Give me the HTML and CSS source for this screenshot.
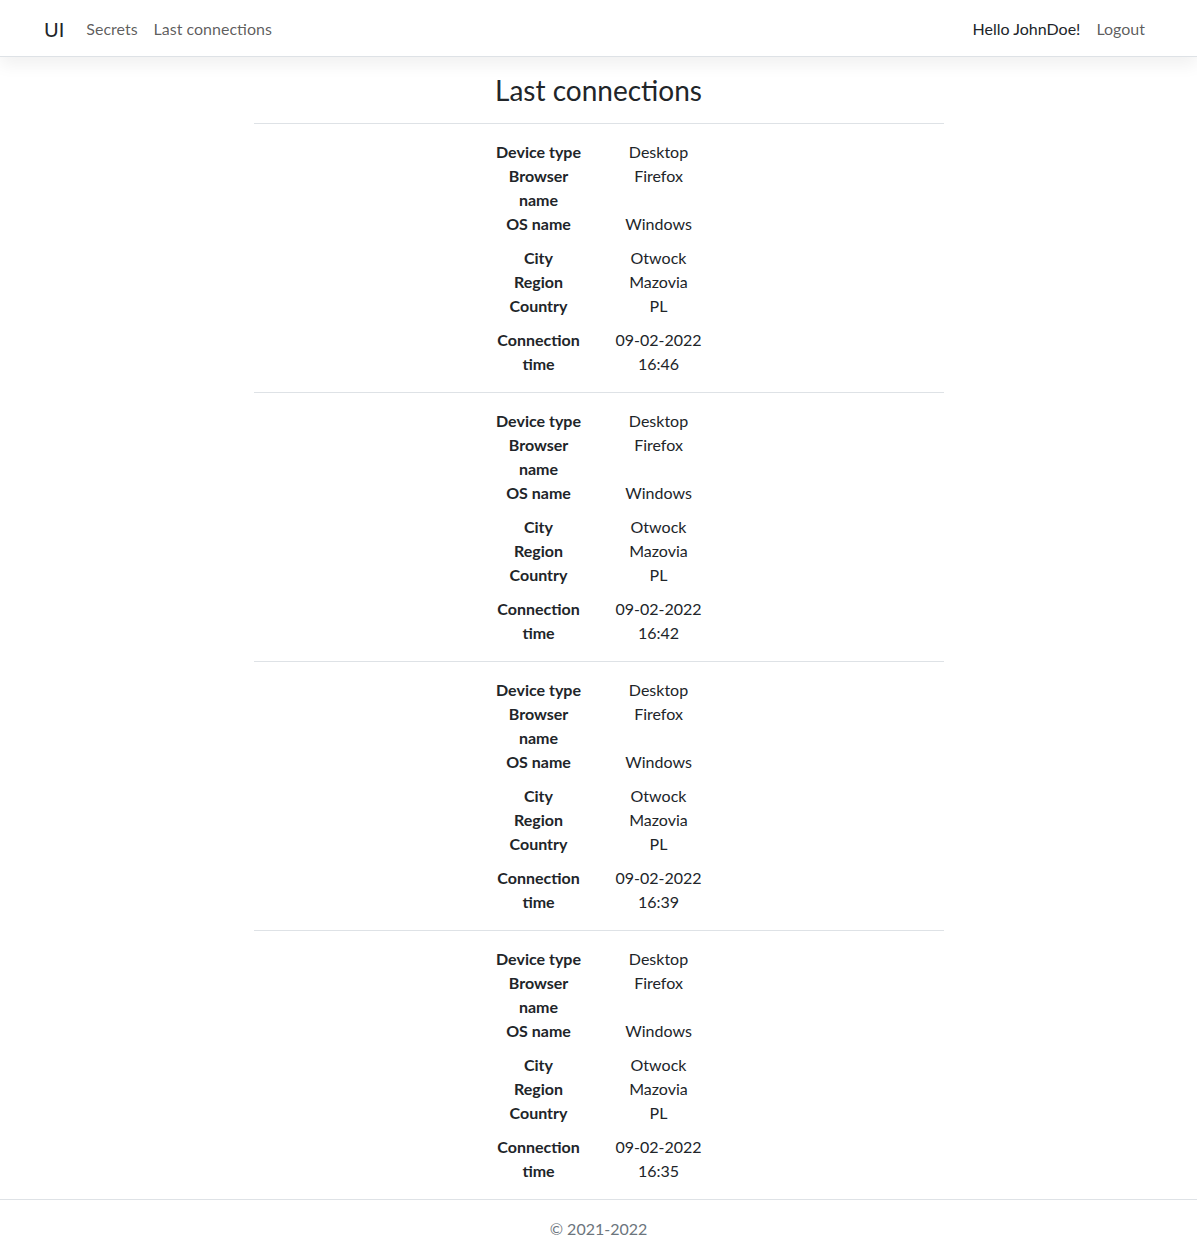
FILE: index.html
```html
<!DOCTYPE html>
<html lang="en">
<head>
<meta charset="utf-8">
<title>Last connections</title>
<link rel="stylesheet" href="styles.css">
</head>
<body>
<header class="navbar">
  <div class="nav-left">
    <a class="brand" href="#">UI</a>
    <a class="nav-link" href="#">Secrets</a>
    <a class="nav-link" href="#">Last connections</a>
  </div>
  <div class="nav-right">
    <span class="nav-link nav-user">Hello JohnDoe!</span>
    <a class="nav-link" href="#">Logout</a>
  </div>
</header>

<main class="main">
  <h3 class="title">Last connections</h3>
  <div class="list">
    <section class="entry">
      <dl class="group"><dt>Device type</dt><dd>Desktop</dd><dt>Browser name</dt><dd>Firefox</dd><dt>OS name</dt><dd>Windows</dd></dl>
      <dl class="group"><dt>City</dt><dd>Otwock</dd><dt>Region</dt><dd>Mazovia</dd><dt>Country</dt><dd>PL</dd></dl>
      <dl class="group"><dt>Connection time</dt><dd>09-02-2022 16:46</dd></dl>
    </section>
    <section class="entry">
      <dl class="group"><dt>Device type</dt><dd>Desktop</dd><dt>Browser name</dt><dd>Firefox</dd><dt>OS name</dt><dd>Windows</dd></dl>
      <dl class="group"><dt>City</dt><dd>Otwock</dd><dt>Region</dt><dd>Mazovia</dd><dt>Country</dt><dd>PL</dd></dl>
      <dl class="group"><dt>Connection time</dt><dd>09-02-2022 16:42</dd></dl>
    </section>
    <section class="entry">
      <dl class="group"><dt>Device type</dt><dd>Desktop</dd><dt>Browser name</dt><dd>Firefox</dd><dt>OS name</dt><dd>Windows</dd></dl>
      <dl class="group"><dt>City</dt><dd>Otwock</dd><dt>Region</dt><dd>Mazovia</dd><dt>Country</dt><dd>PL</dd></dl>
      <dl class="group"><dt>Connection time</dt><dd>09-02-2022 16:39</dd></dl>
    </section>
    <section class="entry">
      <dl class="group"><dt>Device type</dt><dd>Desktop</dd><dt>Browser name</dt><dd>Firefox</dd><dt>OS name</dt><dd>Windows</dd></dl>
      <dl class="group"><dt>City</dt><dd>Otwock</dd><dt>Region</dt><dd>Mazovia</dd><dt>Country</dt><dd>PL</dd></dl>
      <dl class="group"><dt>Connection time</dt><dd>09-02-2022 16:35</dd></dl>
    </section>
  </div>
</main>

<footer class="footer">© 2021-2022</footer>
</body>
</html>
```
FILE: styles.css
```css
* { box-sizing: border-box; }

html, body {
  margin: 0;
  padding: 0;
}

body {
  font-family: Lato, "Liberation Sans", sans-serif;
  font-size: 16px;
  line-height: 24px;
  color: #212529;
  background: #fff;
}

a { text-decoration: none; }

.navbar {
  height: 57px;
  display: flex;
  align-items: center;
  justify-content: space-between;
  padding: 2px 44px 0;
  background: #fff;
  border-bottom: 1px solid #dee2e6;
  box-shadow: 0 8px 16px rgba(0, 0, 0, 0.06);
  position: relative;
}

.nav-left, .nav-right {
  display: flex;
  align-items: center;
}

.brand {
  font-size: 20px;
  line-height: 30px;
  color: #212529;
  margin-right: 14px;
}

.nav-link {
  padding: 8px;
  color: rgba(0, 0, 0, 0.65);
}

.nav-user {
  color: #212529;
}

.main {
  padding-top: 16px;
}

.title {
  margin: 0;
  font-size: 28px;
  font-weight: 400;
  line-height: 34px;
  text-align: center;
  padding-bottom: 16px;
}

.list {
  width: 690px;
  margin: 0 auto;
}

.entry {
  border-top: 1px solid #dee2e6;
  padding: 16px 0;
  display: flex;
  flex-direction: column;
  gap: 10px;
}

.group {
  margin: 0;
  display: grid;
  grid-template-columns: 96px 96px;
  column-gap: 24px;
  justify-content: center;
  text-align: center;
}

.group dt {
  font-weight: 700;
  grid-column: 1;
}

.group dd {
  margin: 0;
  grid-column: 2;
}

.footer {
  border-top: 1px solid #dee2e6;
  padding: 17px 0 15px;
  text-align: center;
  color: #6c757d;
}
```
